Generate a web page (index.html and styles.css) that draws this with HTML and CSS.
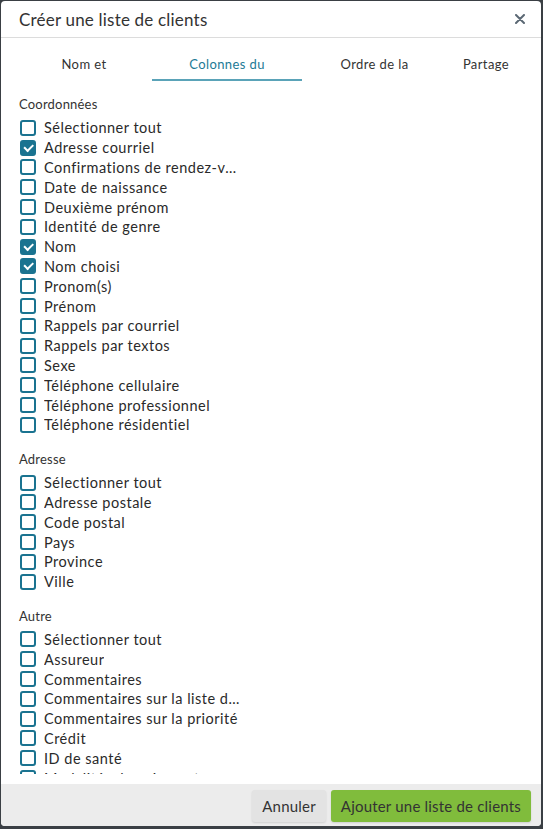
FILE: index.html
```html
<!DOCTYPE html>
<html lang="fr">

<head>
    <meta charset="UTF-8">
    <meta name="viewport" content="width=device-width, initial-scale=1.0">
    <title>Créer une liste de clients</title>
    <link rel="stylesheet" href="styles.css">
</head>

<body>
    <div class="modal">
        <div class="modal-header">
            <h1>Créer une liste de clients</h1>
            <button class="close" aria-label="Fermer">
                <svg width="10" height="10" viewBox="0 0 10 10">
                    <path d="M1 1 L9 9 M9 1 L1 9" stroke="#5b6874" stroke-width="2" stroke-linecap="round" />
                </svg>
            </button>
        </div>
        <div class="tabs">
            <div class="tab tab-1">Nom et</div>
            <div class="tab tab-2 active">Colonnes du</div>
            <div class="tab tab-3">Ordre de la</div>
            <div class="tab tab-4">Partage</div>
        </div>
        <div class="modal-body">
            <div class="group">
                <h2>Coordonnées</h2>
                <ul>
                    <li><span class="box"></span><span class="label">Sélectionner tout</span></li>
                    <li><span class="box checked"></span><span class="label">Adresse courriel</span></li>
                    <li><span class="box"></span><span class="label">Confirmations de rendez-vous</span></li>
                    <li><span class="box"></span><span class="label">Date de naissance</span></li>
                    <li><span class="box"></span><span class="label">Deuxième prénom</span></li>
                    <li><span class="box"></span><span class="label">Identité de genre</span></li>
                    <li><span class="box checked"></span><span class="label">Nom</span></li>
                    <li><span class="box checked"></span><span class="label">Nom choisi</span></li>
                    <li><span class="box"></span><span class="label">Pronom(s)</span></li>
                    <li><span class="box"></span><span class="label">Prénom</span></li>
                    <li><span class="box"></span><span class="label">Rappels par courriel</span></li>
                    <li><span class="box"></span><span class="label">Rappels par textos</span></li>
                    <li><span class="box"></span><span class="label">Sexe</span></li>
                    <li><span class="box"></span><span class="label">Téléphone cellulaire</span></li>
                    <li><span class="box"></span><span class="label">Téléphone professionnel</span></li>
                    <li><span class="box"></span><span class="label">Téléphone résidentiel</span></li>
                </ul>
            </div>
            <div class="group">
                <h2>Adresse</h2>
                <ul>
                    <li><span class="box"></span><span class="label">Sélectionner tout</span></li>
                    <li><span class="box"></span><span class="label">Adresse postale</span></li>
                    <li><span class="box"></span><span class="label">Code postal</span></li>
                    <li><span class="box"></span><span class="label">Pays</span></li>
                    <li><span class="box"></span><span class="label">Province</span></li>
                    <li><span class="box"></span><span class="label">Ville</span></li>
                </ul>
            </div>
            <div class="group">
                <h2>Autre</h2>
                <ul>
                    <li><span class="box"></span><span class="label">Sélectionner tout</span></li>
                    <li><span class="box"></span><span class="label">Assureur</span></li>
                    <li><span class="box"></span><span class="label">Commentaires</span></li>
                    <li><span class="box"></span><span class="label">Commentaires sur la liste d'attente</span></li>
                    <li><span class="box"></span><span class="label">Commentaires sur la priorité</span></li>
                    <li><span class="box"></span><span class="label">Crédit</span></li>
                    <li><span class="box"></span><span class="label">ID de santé</span></li>
                    <li><span class="box"></span><span class="label">Modalités de paiement</span></li>
                    <li><span class="box"></span><span class="label">Numéro de dossier</span></li>
                </ul>
            </div>
        </div>
        <div class="modal-footer">
            <button class="btn btn-cancel">Annuler</button>
            <button class="btn btn-primary">Ajouter une liste de clients</button>
        </div>
    </div>
</body>

</html>
```

FILE: styles.css
```css
body {
    font-family: Lato, "Open Sans", sans-serif;
    margin: 0;
    padding: 1px 2px 3px 1px;
    background-color: #3a3f44;
    color: #2a2a2a;
}

.modal {
    width: 540px;
    height: 825px;
    background-color: white;
    border-radius: 4px;
    overflow: hidden;
    display: flex;
    flex-direction: column;
}

.modal-header {
    height: 36px;
    border-bottom: 1px solid #dcdcdc;
    display: flex;
    align-items: center;
    justify-content: space-between;
    padding: 0 12px 0 18px;
    flex-shrink: 0;
}

.modal-header h1 {
    margin: 0;
    font-size: 17px;
    font-weight: normal;
    letter-spacing: 0.2px;
    color: #333;
}

.close {
    background: none;
    border: none;
    padding: 4px;
    display: flex;
    cursor: pointer;
}

.tabs {
    display: flex;
    padding-left: 15px;
    flex-shrink: 0;
}

.tab {
    padding: 18px 0 7px;
    line-height: 16px;
    font-size: 13px;
    letter-spacing: 0.4px;
    text-align: center;
    border-bottom: 2px solid transparent;
    color: #333;
}

.tab-1 { width: 136px; }
.tab-2 { width: 150px; }
.tab-3 { width: 145px; }
.tab-4 { width: 78px; }

.tab.active {
    color: #1d7a96;
    border-bottom-color: #5aa3b8;
}

.modal-body {
    flex: 1;
    overflow: hidden;
    padding: 15px 18px 0;
    margin-bottom: 10px;
}

.group {
    margin-bottom: 16px;
}

.group h2 {
    margin: 0 0 6px;
    font-size: 13px;
    line-height: 16px;
    font-weight: normal;
    letter-spacing: 0.2px;
    color: #333;
}

.group ul {
    list-style: none;
    margin: 0;
    padding: 0;
}

.group li {
    display: flex;
    align-items: center;
    height: 19.8px;
    font-size: 14.5px;
    letter-spacing: 0.5px;
}

.box {
    width: 16px;
    height: 16px;
    box-sizing: border-box;
    border: 2px solid #1a7390;
    border-radius: 3px;
    margin: 0 8px 0 1px;
    flex-shrink: 0;
    position: relative;
}

.box.checked {
    background-color: #1a7390;
}

.box.checked::after {
    content: "";
    position: absolute;
    left: 3px;
    top: 0px;
    width: 7px;
    height: 3.5px;
    border-left: 2px solid white;
    border-bottom: 2px solid white;
    transform: translate(-1px, 2px) rotate(-45deg);
}

.label {
    max-width: 196px;
    white-space: nowrap;
    overflow: hidden;
    text-overflow: ellipsis;
}

.modal-footer {
    height: 42px;
    flex-shrink: 0;
    background-color: #ececec;
    display: flex;
    justify-content: flex-end;
    align-items: flex-start;
    gap: 5px;
    padding: 6px 10px 0;
    box-sizing: border-box;
}

.btn {
    height: 32px;
    border: none;
    border-radius: 3px;
    font-family: Lato, "Open Sans", sans-serif;
    font-size: 15px;
    letter-spacing: 0.2px;
    color: #333;
    padding: 0 10px;
    cursor: pointer;
    box-shadow: 0 1px 2px rgba(0, 0, 0, 0.12);
}

.btn-cancel {
    background-color: #e3e3e3;
}

.btn-primary {
    background-color: #80bc3c;
}
```
